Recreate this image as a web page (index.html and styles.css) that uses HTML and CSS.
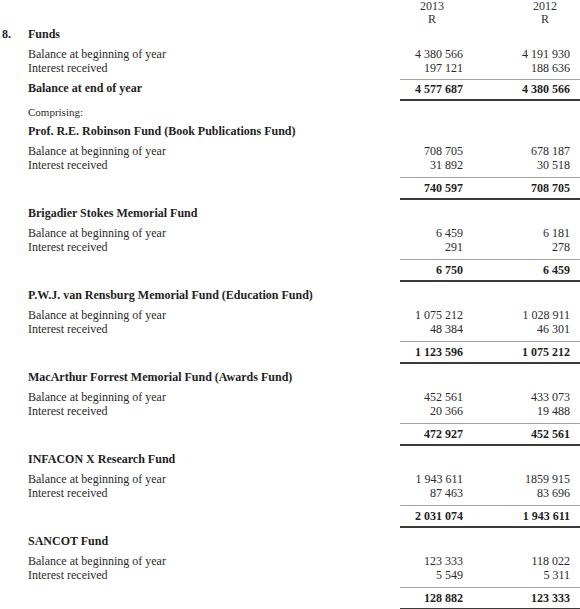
FILE: index.html
```html
<!DOCTYPE html>
<html>
<head>
<meta charset="utf-8">
<link rel="stylesheet" href="styles.css">
</head>
<body>
<div class="note">
  <div class="row years">
    <span></span><span></span>
    <span class="c1"><span class="yr">2013<br>R</span></span>
    <span class="c2"><span class="yr">2012<br>R</span></span>
  </div>
  <div class="row title">
    <span class="no">8.</span><span class="label">Funds</span><span class="c1"></span><span class="c2"></span>
  </div>
  <div class="row line first">
    <span></span><span class="label">Balance at beginning of year</span><span class="c1">4 380 566</span><span class="c2">4 191 930</span>
  </div>
  <div class="row line">
    <span></span><span class="label">Interest received</span><span class="c1">197 121</span><span class="c2">188 636</span>
  </div>
  <div class="row total main">
    <span></span><span class="label">Balance at end of year</span><span class="c1">4 577 687</span><span class="c2">4 380 566</span>
  </div>
  <div class="row comprising">
    <span></span><span class="label">Comprising:</span><span></span><span></span>
  </div>

  <section class="fund lead">
    <div class="row fund-title"><span></span><span class="label">Prof. R.E. Robinson Fund (Book Publications Fund)</span><span></span><span></span></div>
    <div class="row line first"><span></span><span class="label">Balance at beginning of year</span><span class="c1">708 705</span><span class="c2">678 187</span></div>
    <div class="row line"><span></span><span class="label">Interest received</span><span class="c1">31 892</span><span class="c2">30 518</span></div>
    <div class="row total"><span></span><span></span><span class="c1">740 597</span><span class="c2">708 705</span></div>
  </section>

  <section class="fund">
    <div class="row fund-title"><span></span><span class="label">Brigadier Stokes Memorial Fund</span><span></span><span></span></div>
    <div class="row line first"><span></span><span class="label">Balance at beginning of year</span><span class="c1">6 459</span><span class="c2">6 181</span></div>
    <div class="row line"><span></span><span class="label">Interest received</span><span class="c1">291</span><span class="c2">278</span></div>
    <div class="row total"><span></span><span></span><span class="c1">6 750</span><span class="c2">6 459</span></div>
  </section>

  <section class="fund">
    <div class="row fund-title"><span></span><span class="label">P.W.J. van Rensburg Memorial Fund (Education Fund)</span><span></span><span></span></div>
    <div class="row line first"><span></span><span class="label">Balance at beginning of year</span><span class="c1">1 075 212</span><span class="c2">1 028 911</span></div>
    <div class="row line"><span></span><span class="label">Interest received</span><span class="c1">48 384</span><span class="c2">46 301</span></div>
    <div class="row total"><span></span><span></span><span class="c1">1 123 596</span><span class="c2">1 075 212</span></div>
  </section>

  <section class="fund">
    <div class="row fund-title"><span></span><span class="label">MacArthur Forrest Memorial Fund (Awards Fund)</span><span></span><span></span></div>
    <div class="row line first"><span></span><span class="label">Balance at beginning of year</span><span class="c1">452 561</span><span class="c2">433 073</span></div>
    <div class="row line"><span></span><span class="label">Interest received</span><span class="c1">20 366</span><span class="c2">19 488</span></div>
    <div class="row total"><span></span><span></span><span class="c1">472 927</span><span class="c2">452 561</span></div>
  </section>

  <section class="fund">
    <div class="row fund-title"><span></span><span class="label">INFACON X Research Fund</span><span></span><span></span></div>
    <div class="row line first"><span></span><span class="label">Balance at beginning of year</span><span class="c1">1 943 611</span><span class="c2">1859 915</span></div>
    <div class="row line"><span></span><span class="label">Interest received</span><span class="c1">87 463</span><span class="c2">83 696</span></div>
    <div class="row total"><span></span><span></span><span class="c1">2 031 074</span><span class="c2">1 943 611</span></div>
  </section>

  <section class="fund">
    <div class="row fund-title"><span></span><span class="label">SANCOT Fund</span><span></span><span></span></div>
    <div class="row line first"><span></span><span class="label">Balance at beginning of year</span><span class="c1">123 333</span><span class="c2">118 022</span></div>
    <div class="row line"><span></span><span class="label">Interest received</span><span class="c1">5 549</span><span class="c2">5 311</span></div>
    <div class="row total"><span></span><span></span><span class="c1">128 882</span><span class="c2">123 333</span></div>
  </section>
</div>
</body>
</html>
```

FILE: styles.css
```css
html, body {
  margin: 0;
  padding: 0;
  background: #ffffff;
}

body {
  font-family: "Liberation Serif", "Times New Roman", serif;
  font-size: 12px;
  color: #2a2a2a;
  width: 580px;
  overflow: hidden;
}

.note {
  display: flex;
  flex-direction: column;
}

.row {
  display: grid;
  grid-template-columns: 28px 372px 70px 110px;
  line-height: 14px;
  white-space: nowrap;
}

.row .c1 {
  text-align: right;
  padding-right: 7px;
}

.row .c2 {
  text-align: right;
  padding-right: 10px;
}

.years {
  line-height: 13px;
  color: #333333;
}

.years .c1 {
  padding-right: 26px;
}

.years .c2 {
  padding-right: 23px;
}

.yr {
  display: inline-block;
  text-align: center;
}

.title {
  margin-top: 1px;
  font-weight: bold;
  color: #1e1e1e;
}

.no {
  padding-left: 2px;
}

.line.first {
  margin-top: 6px;
}

.total .c1,
.total .c2 {
  border-top: 1px solid #a0a0a0;
  border-bottom: 2px solid #3a3a3a;
  padding-top: 3px;
  padding-bottom: 3px;
  font-weight: bold;
  color: #1e1e1e;
}

.total.main {
  margin-top: 4px;
}

.total.main .label {
  font-weight: bold;
  color: #1e1e1e;
  padding-top: 2px;
}

.total.main .c1,
.total.main .c2 {
  padding-top: 2px;
}

.comprising {
  margin-top: 4px;
  font-size: 11px;
}

.fund {
  display: flex;
  flex-direction: column;
  margin-top: 6px;
}

.fund.lead {
  margin-top: 5px;
}

.fund .total {
  margin-top: 5px;
}

.fund-title {
  font-weight: bold;
  color: #1e1e1e;
}
```
